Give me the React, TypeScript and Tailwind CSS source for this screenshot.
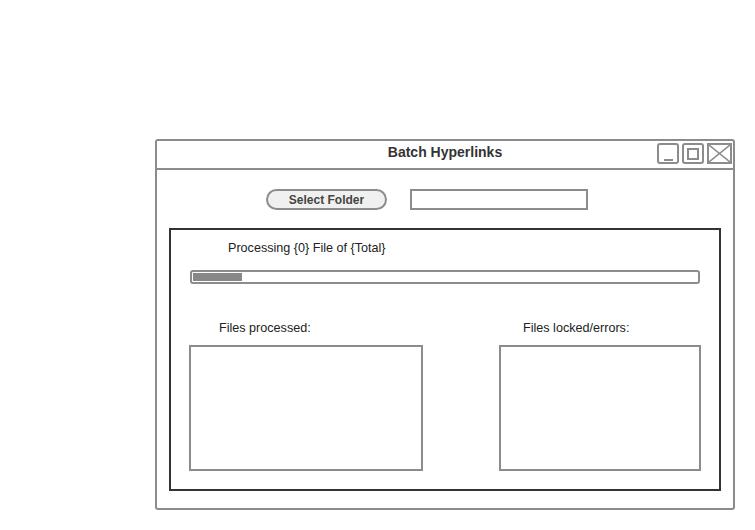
const font = { fontFamily: '"Liberation Sans", Arial, sans-serif' };

const ControlBox = ({ children }: { children: React.ReactNode }) => (
  <div className="w-[22px] h-[21px] border-2 border-[#8c8c8c] rounded-[3px] flex items-center justify-center bg-white">
    {children}
  </div>
);

const ListBox = ({ label, labelOffset, width }: { label: string; labelOffset: string; width: string }) => (
  <div className="flex flex-col">
    <div className={`text-[12.6px] leading-[14px] text-[#222] ${labelOffset}`}>{label}</div>
    <div className={`mt-[10px] h-[126px] border-2 border-[#8c8c8c] bg-white ${width}`} />
  </div>
);

export default function App() {
  return (
    <div className="min-h-screen bg-white pl-[155px] pt-[139px]" style={font}>
      <div className="w-[580px] h-[371px] border-2 border-[#8c8c8c] rounded-[3px] flex flex-col">
        <div className="h-[29px] shrink-0 border-b-2 border-[#8c8c8c] grid grid-cols-[1fr_auto_1fr]">
          <div />
          <div className="pt-[3px] text-[14px] leading-[16px] font-bold text-[#333]">Batch Hyperlinks</div>
          <div className="flex justify-end items-start pt-[2px] pr-[1px] gap-[3px]">
            <ControlBox>
              <span className="mt-[12px] w-[9px] h-[2px] bg-[#8c8c8c]" />
            </ControlBox>
            <ControlBox>
              <span className="w-[12px] h-[12px] border-2 border-[#8c8c8c]" />
            </ControlBox>
            <div className="w-[25px] h-[21px] border-2 border-[#8c8c8c] bg-white">
              <svg viewBox="0 0 21 17" className="w-full h-full" preserveAspectRatio="none">
                <path d="M0 0L21 17M21 0L0 17" stroke="#8c8c8c" strokeWidth="1.5" fill="none" />
              </svg>
            </div>
          </div>
        </div>

        <div className="mt-[19px] pl-[109px] flex items-center gap-[23px]">
          <button
            type="button"
            className="w-[121px] h-[21px] rounded-full border-2 border-[#8c8c8c] bg-[#f0f0f0] text-[12px] font-bold text-[#444] leading-none"
          >
            Select Folder
          </button>
          <div className="w-[178px] h-[21px] border-2 border-[#8c8c8c] bg-white" />
        </div>

        <div className="mt-[18px] ml-[12px] w-[552px] h-[263px] border-2 border-[#333] flex flex-col">
          <div className="mt-[11px] pl-[57px] text-[12.6px] leading-[14px] text-[#222]">Processing {'{0}'} File of {'{Total}'}</div>
          <div className="mt-[15px] ml-[19px] w-[510px] h-[14px] border-2 border-[#8c8c8c] rounded-[3px] p-px bg-white">
            <div className="w-[49px] h-full bg-[#888]" />
          </div>
          <div className="mt-[37px] ml-[18px] flex gap-[76px]">
            <ListBox label="Files processed:" labelOffset="pl-[30px]" width="w-[234px]" />
            <ListBox label="Files locked/errors:" labelOffset="pl-[24px]" width="w-[202px]" />
          </div>
        </div>
      </div>
    </div>
  );
}
